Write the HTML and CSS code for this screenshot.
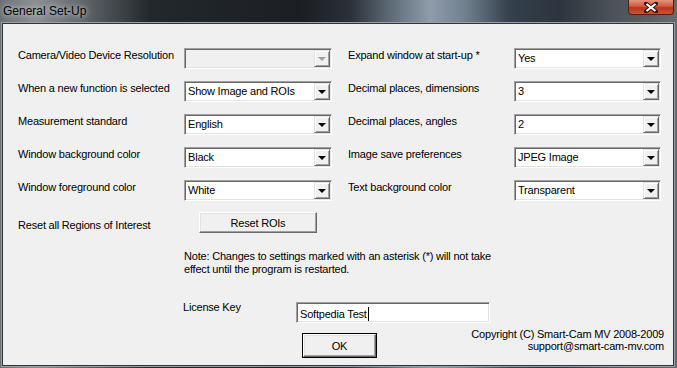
FILE: index.html
```html
<!DOCTYPE html>
<html lang="en">
<head>
  <meta charset="UTF-8">
  <title>General Set-Up</title>
  <link rel="stylesheet" href="styles.css">
</head>
<body>
  <div class="window">
    <div class="titlebar">
      <span class="title">General Set-Up</span>
      <span class="close">
        <svg width="14" height="11" viewBox="0 0 14 11">
          <path d="M2 1.5 L12 9.5 M12 1.5 L2 9.5" stroke="#3a1008" stroke-width="4" stroke-linecap="square"/>
          <path d="M2.5 2 L11.5 9 M11.5 2 L2.5 9" stroke="#fff" stroke-width="2.2"/>
        </svg>
      </span>
    </div>

    <div class="client">
      <div class="settings">
        <label class="lbl">Camera/Video Device Resolution</label>
        <div class="combo disabled"><span class="value"></span><span class="drop"></span></div>
        <label class="lbl">Expand window at start-up *</label>
        <div class="combo"><span class="value">Yes</span><span class="drop"></span></div>

        <label class="lbl">When a new function is selected</label>
        <div class="combo"><span class="value">Show Image and ROIs</span><span class="drop"></span></div>
        <label class="lbl">Decimal places, dimensions</label>
        <div class="combo"><span class="value">3</span><span class="drop"></span></div>

        <label class="lbl">Measurement standard</label>
        <div class="combo"><span class="value">English</span><span class="drop"></span></div>
        <label class="lbl">Decimal places, angles</label>
        <div class="combo"><span class="value">2</span><span class="drop"></span></div>

        <label class="lbl">Window background color</label>
        <div class="combo"><span class="value">Black</span><span class="drop"></span></div>
        <label class="lbl">Image save preferences</label>
        <div class="combo"><span class="value">JPEG Image</span><span class="drop"></span></div>

        <label class="lbl">Window foreground color</label>
        <div class="combo"><span class="value">White</span><span class="drop"></span></div>
        <label class="lbl">Text background color</label>
        <div class="combo"><span class="value">Transparent</span><span class="drop"></span></div>
      </div>

      <div class="reset-row">
        <label class="reset-lbl">Reset all Regions of Interest</label>
        <button class="btn reset">Reset ROIs</button>
      </div>

      <p class="note">Note: Changes to settings marked with an asterisk (*) will not take<br>effect until the program is restarted.</p>

      <div class="license">
        <label class="license-lbl">License Key</label>
        <div class="textbox">Softpedia Test<span class="caret"></span></div>
      </div>

      <div class="bottom">
        <button class="btn ok">OK</button>
        <div class="copyright">
          Copyright (C) Smart-Cam MV 2008-2009<br>
          support@smart-cam-mv.com
        </div>
      </div>
    </div>
  </div>
</body>
</html>
```

FILE: styles.css
```css
body {
  margin: 0;
  background: #3a3f45;
  font-family: "Liberation Sans", Arial, sans-serif;
  font-size: 11px;
  letter-spacing: -0.2px;
  color: #000;
}
.window {
  width: 677px;
  height: 368px;
  display: flex;
  flex-direction: column;
  background: linear-gradient(to right, #6a6f74 0px, #8c9095 35px, #5a5f64 90px, #23282d 150px, #1b1f24 300px, #2a3036 350px, #5d6a76 390px, #8e9cab 430px, #71808e 465px, #34404c 510px, #2c343e 560px, #4b5157 610px, #66696d 677px);
}
.titlebar {
  height: 23px;
  display: flex;
  align-items: flex-start;
  padding-left: 3px;
}
.title {
  margin-top: 4px;
  font-size: 12px;
  line-height: 14px;
  letter-spacing: 0;
  color: #000;
  text-shadow: 0 0 4px #c9cdd1, 0 0 8px #b8bcc0;
}
.close {
  margin-left: auto;
  margin-right: 3px;
  width: 44px;
  height: 14px;
  border: 1px solid #5b1a10;
  border-top: none;
  border-radius: 0 0 4px 4px;
  background: linear-gradient(#e3947f, #cf5a3f 45%, #b8341c 55%, #c9553a);
  display: flex;
  align-items: center;
  justify-content: center;
}
.client {
  flex: 1;
  margin: 0 3px 2px 2px;
  background: #f0f0f0;
  border: 1px solid #30353a;
  box-shadow: 0 0 0 1px #9aa0a6;
  padding: 24px 9px 0 15px;
}
.settings {
  display: grid;
  grid-template-columns: 150px 148px 150px 147px;
  grid-auto-rows: 21px;
  column-gap: 16px;
  row-gap: 12px;
}
.lbl {
  padding-top: 1px;
  line-height: 13px;
  white-space: nowrap;
}
.combo {
  display: flex;
  background: #fff;
  border: 1px solid;
  border-color: #a0a0a0 #fff #fff #a0a0a0;
  box-shadow: inset 1px 1px #696969, inset -1px -1px #e3e3e3;
  padding: 1px;
}
.combo.disabled {
  background: #f0f0f0;
}
.combo .value {
  flex: 1;
  padding-left: 2px;
  line-height: 17px;
  white-space: nowrap;
}
.combo .drop {
  width: 16px;
  height: 17px;
  box-sizing: border-box;
  background: #f0f0f0;
  border: 1px solid;
  border-color: #e3e3e3 #696969 #696969 #e3e3e3;
  box-shadow: inset 1px 1px #fff, inset -1px -1px #a0a0a0;
  display: flex;
  align-items: center;
  justify-content: center;
}
.combo .drop::after {
  content: "";
  border-left: 4px solid transparent;
  border-right: 4px solid transparent;
  border-top: 4px solid #000;
  margin-top: 1px;
}
.combo.disabled .drop::after {
  border-top-color: #a0a0a0;
}
.btn {
  font-family: inherit;
  font-size: 11px;
  letter-spacing: -0.2px;
  color: #000;
  background: #f0f0f0;
  padding: 0;
  border: 1px solid;
  border-color: #fff #696969 #696969 #fff;
  box-shadow: inset -1px -1px #a0a0a0, inset 1px 1px #e3e3e3;
}
.reset-row {
  display: flex;
  margin-top: 11px;
}
.reset-lbl {
  width: 181px;
  padding-top: 7px;
  line-height: 13px;
}
.reset {
  width: 118px;
  height: 21px;
}
.note {
  margin: 17px 0 0 166px;
  line-height: 13px;
}
.license {
  display: flex;
  margin-top: 26px;
}
.license-lbl {
  margin-left: 165px;
  width: 113px;
  line-height: 13px;
  margin-top: -1px;
}
.textbox {
  width: 194px;
  height: 21px;
  box-sizing: border-box;
  background: #fff;
  border: 1px solid;
  border-color: #a0a0a0 #fff #fff #a0a0a0;
  box-shadow: inset 1px 1px #696969, inset -1px -1px #e3e3e3;
  padding: 2px 0 0 3px;
  line-height: 16px;
  display: flex;
  align-items: center;
}
.caret {
  display: inline-block;
  width: 1px;
  height: 14px;
  background: #000;
  margin-left: 1px;
}
.bottom {
  display: flex;
  align-items: flex-start;
  margin-top: 11px;
}
.ok {
  margin-left: 285px;
  width: 73px;
  height: 23px;
  outline: 1px solid #000;
  outline-offset: 0;
}
.copyright {
  margin-left: auto;
  margin-top: -6px;
  text-align: right;
  line-height: 12px;
}
```
